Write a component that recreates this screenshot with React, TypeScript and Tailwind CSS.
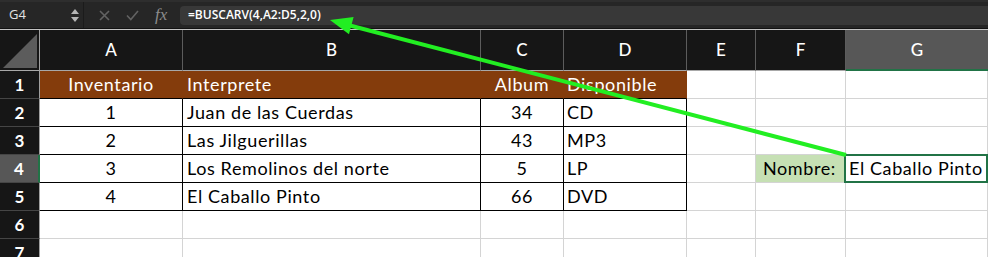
import { FunctionComponent } from "react";

type Cell = { text?: string; cls: string };

const grid = "border-r border-b border-[#d4d4d4]";
const tbl = "border-r border-b border-black";
const brown = "bg-[#843c0c] text-white border-r border-r-[#843c0c] border-b border-b-black";

const rowHead = "bg-[#161616] text-white font-bold text-[17px] tracking-normal justify-center border-r border-r-[#a0a0a0] border-b border-b-[#454545]";
const rowHeadActive = "bg-[#575757] text-white font-bold text-[17px] tracking-normal justify-center border-r-2 border-r-[#217346] border-b border-b-[#454545]";

const data: { n: number; inv: string; name: string; album: string; disp: string }[] = [
  { n: 2, inv: "1", name: "Juan de las Cuerdas", album: "34", disp: "CD" },
  { n: 3, inv: "2", name: "Las Jilguerillas", album: "43", disp: "MP3" },
  { n: 4, inv: "3", name: "Los Remolinos del norte", album: "5", disp: "LP" },
  { n: 5, inv: "4", name: "El Caballo Pinto", album: "66", disp: "DVD" },
];

const buildRows = (): Cell[][] => {
  const rows: Cell[][] = [];
  rows.push([
    { text: "1", cls: rowHead },
    { text: "Inventario", cls: `${brown} justify-center` },
    { text: "Interprete", cls: `${brown} pl-[4px]` },
    { text: "Album", cls: `${brown} justify-center` },
    { text: "Disponible", cls: `${brown} pl-[3px]` },
    { cls: grid },
    { cls: grid },
    { cls: grid },
  ]);
  data.forEach((d) => {
    const active = d.n === 4;
    rows.push([
      { text: String(d.n), cls: active ? rowHeadActive : rowHead },
      { text: d.inv, cls: `${tbl} justify-center` },
      { text: d.name, cls: `${tbl} pl-[4px]` },
      { text: d.album, cls: `${tbl} justify-center` },
      { text: d.disp, cls: `${tbl} pl-[3px]` },
      { cls: grid },
      active
        ? { text: "Nombre:", cls: `${grid} bg-[#c6e0b4] pl-[7px]` }
        : { cls: grid },
      active ? { text: "El Caballo Pinto", cls: `${grid} selected pl-[3px]` } : { cls: grid },
    ]);
  });
  [6, 7].forEach((n) => {
    rows.push([
      { text: String(n), cls: rowHead },
      { cls: grid },
      { cls: grid },
      { cls: grid },
      { cls: grid },
      { cls: grid },
      { cls: grid },
      { cls: grid },
    ]);
  });
  return rows;
};

const Toolbar: FunctionComponent = () => (
  <div className="h-[28px] bg-[#262626] border-t-2 border-[#2e2e2e] flex items-center font-['Open_Sans',sans-serif]">
    <div className="w-[84px] h-full flex items-center justify-between pl-[9px] pr-[4px] border-r border-[#1b1b1b]">
      <span className="text-[13px] text-[#e2e2e2]">G4</span>
      <div className="flex flex-col gap-[3px] items-center">
        <svg width="8" height="5" viewBox="0 0 8 5">
          <polygon points="4,0 8,5 0,5" fill="#b5b5b5" />
        </svg>
        <svg width="8" height="5" viewBox="0 0 8 5">
          <polygon points="0,0 8,0 4,5" fill="#b5b5b5" />
        </svg>
      </div>
    </div>
    <div className="w-[96px] flex items-center pl-[15px] gap-[16px]">
      <svg width="11" height="11" viewBox="0 0 11 11">
        <path d="M1 1 L10 10 M10 1 L1 10" stroke="#626262" strokeWidth="1.6" />
      </svg>
      <svg width="13" height="11" viewBox="0 0 13 11">
        <path d="M1 5.5 L4.8 9.5 L12 1" stroke="#626262" strokeWidth="1.6" fill="none" />
      </svg>
      <span className="font-['Liberation_Serif',serif] italic text-[17px] text-[#8c8c8c] leading-none -mt-[2px]">
        fx
      </span>
    </div>
    <div className="flex-1 h-[19px] bg-[#383838] rounded-l-[4px] flex items-center pl-[8px]">
      <span className="text-[12px] font-semibold text-white">=BUSCARV(4,A2:D5,2,0)</span>
    </div>
  </div>
);

const App: FunctionComponent = () => {
  const rows = buildRows();
  const letters = ["A", "B", "C", "D", "E", "F", "G"];
  return (
    <div className="relative w-[988px] h-[257px] overflow-hidden bg-white">
      <Toolbar />
      <div className="h-[1px] bg-[#121212]" />
      <div className="h-[1px] bg-[#c4c4c4]" />
      <div className="grid grid-cols-[40px_143px_298px_83px_123px_69px_90px_1fr] grid-rows-[41px_28px_28px_28px_28px_28px_28px_28px] font-['Lato',sans-serif] text-[18px] tracking-[0.6px] text-black">
        <div className="bg-[#161616] border-r border-r-[#a0a0a0] border-b border-b-[#a8a8a8] flex items-end justify-end p-[2px]">
          <svg width="34" height="34" viewBox="0 0 34 34">
            <polygon points="0,34 34,0 34,34" fill="#5c5c5c" />
          </svg>
        </div>
        {letters.map((l) => (
          <div
            key={l}
            className={
              l === "G"
                ? "bg-[#575757] text-white font-medium text-[17px] tracking-normal flex items-center justify-center border-b-2 border-b-[#217346]"
                : "bg-[#161616] text-white font-medium text-[17px] tracking-normal flex items-center justify-center border-r border-r-[#5c5c5c] border-b border-b-[#a8a8a8]"
            }
          >
            {l}
          </div>
        ))}
        {rows.map((r, ri) =>
          r.map((c, ci) => (
            <div
              key={`${ri}-${ci}`}
              className={`relative flex items-center whitespace-nowrap overflow-visible ${c.cls}`}
            >
              {c.cls.includes("selected") && (
                <div className="absolute -left-[2px] -top-[1px] -right-[1px] -bottom-[1px] border-2 border-[#217346]" />
              )}
              {c.text && <span className="relative">{c.text}</span>}
            </div>
          ))
        )}
      </div>
      <svg className="absolute inset-0 pointer-events-none" width="988" height="257" viewBox="0 0 988 257">
        <line x1="846" y1="155" x2="348" y2="25" stroke="#22ee22" strokeWidth="4" />
        <polygon points="330,20 353.6,16.9 349,34.3" fill="#22ee22" />
      </svg>
    </div>
  );
};

export default App;
